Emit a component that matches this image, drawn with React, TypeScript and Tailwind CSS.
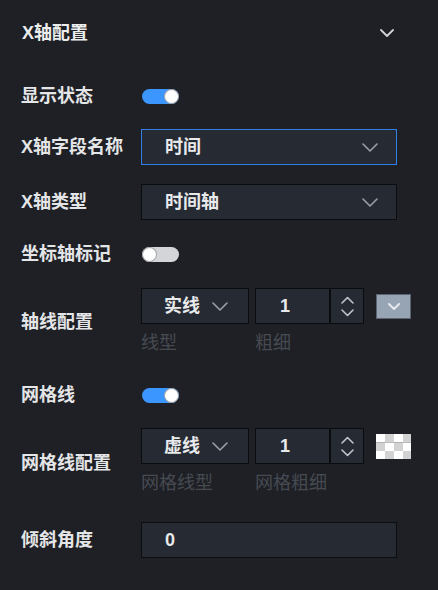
import React from "react";

const FONT = { fontFamily: '"Liberation Sans", "Noto Sans CJK SC", sans-serif' };

function Chevron({ className = "", w = 16, h = 9, stroke = "#9aa0a8", sw = 1.6 }: { className?: string; w?: number; h?: number; stroke?: string; sw?: number }) {
  return (
    <svg width={w} height={h} viewBox={`0 0 ${w} ${h}`} className={className} fill="none">
      <path d={`M1 1 L${w / 2} ${h - 1} L${w - 1} 1`} stroke={stroke} strokeWidth={sw} strokeLinecap="round" strokeLinejoin="round" />
    </svg>
  );
}

function Toggle({ on }: { on: boolean }) {
  return (
    <div className={`relative h-[15px] w-[37px] rounded-full ${on ? "bg-[#3b96ff]" : "bg-[#d4d5d8]"}`}>
      <div
        className={`absolute top-0 h-[15px] w-[15px] rounded-full border border-[#1e2025]/40 bg-white ${on ? "right-0" : "left-0"}`}
      />
    </div>
  );
}

function Label({ children }: { children: React.ReactNode }) {
  return <div className="w-[120px] shrink-0 text-[18px] font-bold text-[#e4e5e7]">{children}</div>;
}

function Select({ value, active = false }: { value: string; active?: boolean }) {
  return (
    <div
      className={`flex h-[36px] w-[256px] items-center justify-between border bg-[#252a33] pl-[23px] pr-[18px] ${
        active ? "border-[#2f7fe6]" : "border-[#0b0c0f]"
      }`}
    >
      <span className="text-[18px] font-bold text-[#e8e9eb]">{value}</span>
      <Chevron />
    </div>
  );
}

function SmallSelect({ value }: { value: string }) {
  return (
    <div className="flex h-[36px] w-[108px] items-center border border-[#0b0c0f] bg-[#252a33] pl-[22px]">
      <span className="text-[18px] font-bold text-[#e8e9eb]">{value}</span>
      <Chevron className="ml-[12px]" />
    </div>
  );
}

function NumberInput() {
  return (
    <div className="flex h-[36px] w-[109px] border border-[#0b0c0f] bg-[#252a33]">
      <div className="flex w-[75px] items-center border-r-2 border-[#0b0c0f] pl-[24px] text-[18px] font-bold text-[#e8e9eb]">
        1
      </div>
      <div className="flex flex-1 flex-col items-center justify-center gap-[5px]">
        <svg width="13" height="8" viewBox="0 0 13 8" fill="none">
          <path d="M1 7 L6.5 1.5 L12 7" stroke="#c0c4ca" strokeWidth="1.6" strokeLinecap="round" strokeLinejoin="round" />
        </svg>
        <svg width="13" height="8" viewBox="0 0 13 8" fill="none">
          <path d="M1 1 L6.5 6.5 L12 1" stroke="#c0c4ca" strokeWidth="1.6" strokeLinecap="round" strokeLinejoin="round" />
        </svg>
      </div>
    </div>
  );
}

function ColorSwatch() {
  return (
    <div className="ml-[6px] flex h-[25px] w-[35px] items-center justify-center border border-[#5b6470] bg-[#96a4b4]">
      <Chevron w={12} h={7} stroke="#e6eaef" sw={2} />
    </div>
  );
}

function CheckerSwatch() {
  const cells = [];
  for (let r = 0; r < 3; r++) {
    for (let c = 0; c < 4; c++) {
      cells.push(
        <rect key={`${r}-${c}`} x={c * 9} y={r * 8.5} width={9} height={8.5} fill={(r + c) % 2 === 0 ? "#ffffff" : "#d2d2d2"} />
      );
    }
  }
  return (
    <div className="ml-[6px] h-[25px] w-[35px] overflow-hidden">
      <svg width="35" height="25" viewBox="0 0 35 25">
        {cells}
      </svg>
    </div>
  );
}

function Caption({ children, w }: { children: React.ReactNode; w: string }) {
  return <div className={`${w} text-[18px] text-[#464a51]`}>{children}</div>;
}

export default function App() {
  return (
    <div className="h-[590px] w-[438px] overflow-hidden bg-[#1e2025]" style={FONT}>
      <div className="flex h-[66px] items-center justify-between pl-[22px] pr-[44px]">
        <span className="text-[18px] font-bold text-[#eceded]">X轴配置</span>
        <Chevron w={14} h={8} stroke="#d0d2d6" sw={1.8} />
      </div>

      <div className="flex flex-col pl-[21px]">
        <div className="mt-[12px] flex h-[36px] items-center">
          <Label>显示状态</Label>
          <div className="pl-[1px]">
            <Toggle on />
          </div>
        </div>

        <div className="mt-[15px] flex items-center">
          <Label>X轴字段名称</Label>
          <Select value="时间" active />
        </div>

        <div className="mt-[19px] flex items-center">
          <Label>X轴类型</Label>
          <Select value="时间轴" />
        </div>

        <div className="mt-[16px] flex h-[36px] items-center">
          <Label>坐标轴标记</Label>
          <div className="pl-[1px]">
            <Toggle on={false} />
          </div>
        </div>

        <div className="mt-[16px] flex items-center">
          <Label>
            <div className="pt-[3px]">轴线配置</div>
          </Label>
          <div className="flex flex-col">
            <div className="flex items-center gap-[6px]">
              <SmallSelect value="实线" />
              <NumberInput />
              <ColorSwatch />
            </div>
            <div className="mt-[9px] flex h-[20px] items-center gap-[6px]">
              <Caption w="w-[108px]">线型</Caption>
              <Caption w="w-[109px]">粗细</Caption>
            </div>
          </div>
        </div>

        <div className="mt-[24px] flex h-[36px] items-center">
          <Label>网格线</Label>
          <div className="pl-[1px]">
            <Toggle on />
          </div>
        </div>

        <div className="mt-[15px] flex items-center">
          <Label>
            <div className="pt-[5px]">网格线配置</div>
          </Label>
          <div className="flex flex-col">
            <div className="flex items-center gap-[6px]">
              <SmallSelect value="虚线" />
              <NumberInput />
              <CheckerSwatch />
            </div>
            <div className="mt-[9px] flex h-[20px] items-center gap-[6px]">
              <Caption w="w-[108px]">网格线型</Caption>
              <Caption w="w-[109px]">网格粗细</Caption>
            </div>
          </div>
        </div>

        <div className="mt-[29px] flex items-center">
          <Label>倾斜角度</Label>
          <div className="flex h-[36px] w-[256px] items-center border border-[#0b0c0f] bg-[#252a33] pl-[23px]">
            <span className="text-[18px] font-bold text-[#e8e9eb]">0</span>
          </div>
        </div>
      </div>
    </div>
  );
}
